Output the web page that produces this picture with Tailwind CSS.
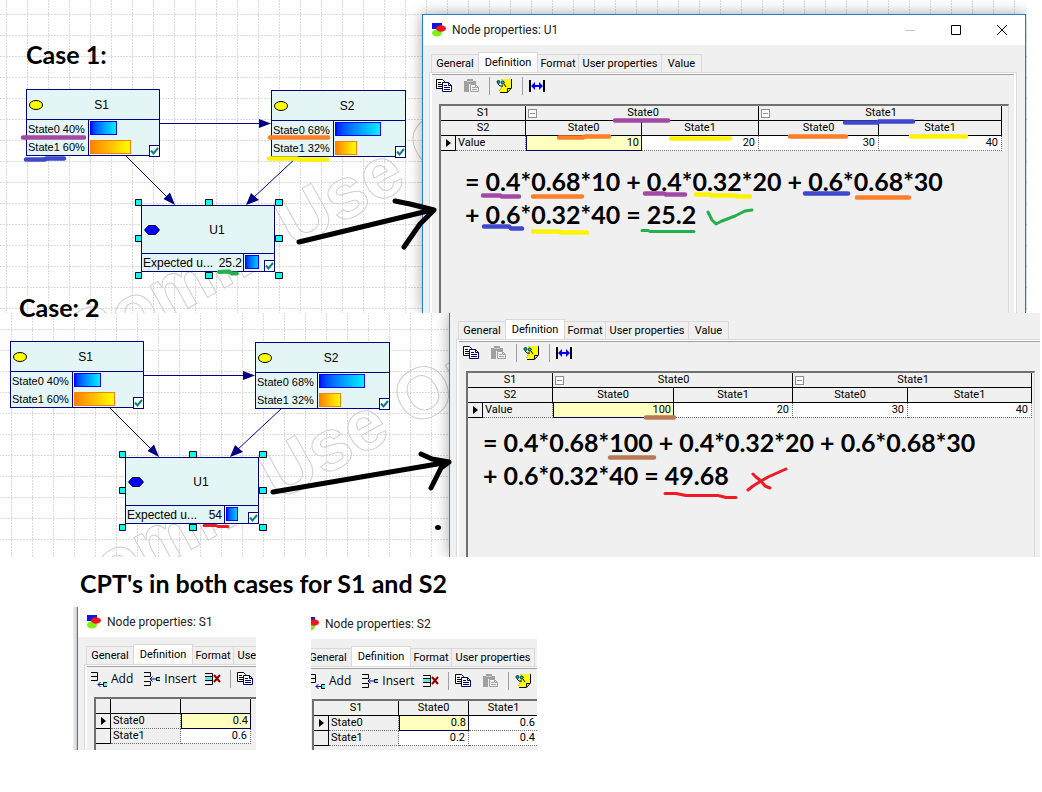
<!DOCTYPE html>
<html lang="en">
<head>
<meta charset="utf-8">
<title>Expected utility: two cases</title>
<script src="https://cdn.jsdelivr.net/npm/@tailwindcss/browser@4"></script>
</head>
<body class="bg-white text-black">
<svg width="0" height="0" class="absolute" aria-hidden="true">
  <defs>
    <pattern id="dots" width="21" height="21" patternUnits="userSpaceOnUse">
      <path d="M6.5 0V21M0 14.5H21" stroke="#dadada" stroke-dasharray="2 1" fill="none"/>
    </pattern>
    <symbol id="logo" viewBox="0 0 16 16">
      <rect x="1" y="1" width="10" height="6" fill="#1414e0"/>
      <ellipse cx="6" cy="11" rx="5" ry="3.500" fill="#80f010"/>
      <ellipse cx="10" cy="6.500" rx="5" ry="3.200" fill="#f01818"/>
    </symbol>
    <symbol id="copy" viewBox="0 0 16 16">
      <path d="M.5 1.500H6.500L8.500 3.500V10.500H.5Z" fill="#fff" stroke="#000"/>
      <path d="M2 4.500H5M2 6.500H6M2 8.500H6" stroke="#000"/>
      <path d="M6.500 4.500H12.500L15.500 7.500V13.500H6.500Z" fill="#fff" stroke="#000060"/>
      <path d="M12.500 4.500V7.500H15.500M8 7.500H11M8 9.500H14M8 11.500H14" stroke="#000060" fill="none"/>
    </symbol>
    <symbol id="paste" viewBox="0 0 16 16">
      <path d="M1 3H4V1H10V3H13V6H6V14H1Z" fill="#a0a0a0"/>
      <path d="M4 3.500H10" stroke="#c8c8c8"/>
      <path d="M7.500 6.500H12.500L15.500 9.500V13.500H7.500Z" fill="#f4f4f4" stroke="#a0a0a0"/>
      <path d="M9 9.500H12M9 11.500H14M12.500 6.500V9.500H15.500" stroke="#a0a0a0" fill="none"/>
    </symbol>
    <symbol id="note" viewBox="0 0 16 16">
      <path d="M6 1H15V10L11 14L3 13.500L6 9Z" fill="#ffff00"/>
      <path d="M15.500 1V10L11.500 14.500H4M11.500 14V10.500H15" stroke="#000" fill="none"/>
      <path d="M6 1V9L3 13" stroke="#c0c000" fill="none"/>
      <ellipse cx="2.500" cy="4" rx="1.500" ry="1.500" fill="#00a0a0" stroke="#003c3c"/>
      <ellipse cx="6.800" cy="4.500" rx="1.500" ry="1.500" fill="#00c0c0" stroke="#003c3c"/>
      <path d="M2 6L4 8H7M8 6L10 9" stroke="#000" fill="none"/>
    </symbol>
    <symbol id="fit" viewBox="0 0 16 16">
      <path d="M1 2V14M15 2V14" stroke="#000" stroke-width="2"/>
      <path d="M4 8H12" stroke="#0000ff" stroke-width="2"/>
      <path d="M2 8L6 4V12ZM14 8L10 4V12Z" fill="#0000ff"/>
    </symbol>
    <symbol id="addrow" viewBox="0 0 16 16">
      <path d="M0 1.500H6.500V9.500H0M0 5.500H6.500" stroke="#000" fill="none"/>
      <path d="M7 13.500H12M9.500 11L7 13.500L9.500 16" stroke="#000080" fill="none"/>
      <path d="M16 11.500H12.500V15.500H16" stroke="#000" fill="none"/><rect x="13" y="12" width="3" height="3" fill="#60e8e8"/>
    </symbol>
    <symbol id="insrow" viewBox="0 0 16 16">
      <path d="M0 1.500H6.500V5.500H0M0 14.500H6.500V10.500H0" stroke="#000" fill="none"/>
      <path d="M6 8H12M8.500 5.500L6 8L8.500 10.500" stroke="#000080" fill="none"/>
      <path d="M16 6.500H12.500V9.500H16" stroke="#000" fill="none"/><rect x="13" y="7" width="3" height="2" fill="#60e8e8"/>
    </symbol>
    <symbol id="delrow" viewBox="0 0 16 16">
      <rect x="0" y="6" width="8" height="3" fill="#60e8e8"/>
      <path d="M0 2.500H7.500V13.500H0M0 5.500H8M0 9.500H8" stroke="#000" fill="none"/>
      <path d="M9 4L15 11M15 4L9 11" stroke="#900000" stroke-width="2"/>
    </symbol>
    <symbol id="tick" viewBox="0 0 9 10"><path d="M1 4.500L3.500 7.500L8 2" stroke="#008080" stroke-width="2" fill="none"/></symbol>
    <symbol id="oval" viewBox="0 0 16 12"><ellipse cx="8" cy="6" rx="6.500" ry="4.500" fill="#ffff00" stroke="#000"/></symbol>
    <symbol id="hex" viewBox="0 0 16 12"><path d="M.5 6L4.500 1.500H11.500L15.500 6L11.500 10.500H4.500Z" fill="#0000ff" stroke="#000040"/></symbol>
    <symbol id="edges" viewBox="0 0 1042 400">
      <path d="M160 123.500H262M126 156L168 198M297 157L252 199" stroke="#000080" fill="none"/>
      <path d="M271 123.500L259 119V128ZM175 205L163.500 199L170 192.500ZM246 205L251 193L259 200Z" fill="#000080"/>
    </symbol>
    <symbol id="grips" viewBox="0 0 1042 400">
      <path d="M135.500 199.500h6v6h-6zM205.500 199.500h7v6h-7zM275.500 199.500h7v6h-7zM135.500 235.500h6v6h-6zM275.500 235.500h7v6h-7zM135.500 272.500h6v6h-6zM205.500 272.500h7v6h-7zM275.500 272.500h7v6h-7z" fill="#00ffff" stroke="#000"/>
    </symbol>
  </defs>
</svg>

<main class="relative overflow-hidden">
  <!-- Case 1 -->
  <section class="relative mr-[15px] flex h-[313px] overflow-hidden" aria-label="Case 1">
    <div class="absolute top-0 left-0 h-[400px] w-[1042px] font-['Liberation_Sans',sans-serif] text-[11px] leading-[18px]">
      <svg class="absolute inset-0" width="1042" height="400" aria-hidden="true"><rect width="1042" height="400" fill="url(#dots)"/><text transform="translate(80 368) rotate(-29)" font-weight="700" font-size="72" fill="none" stroke="#cfcfcf">Comm Use Only</text></svg>
      <svg class="absolute inset-0" width="1042" height="400"><use href="#edges"/></svg>
      <div class="absolute top-[89px] left-[26px] h-[67px] w-[134px] border border-[#000080] bg-[#e4f5f5]">
        <div class="flex h-[30px] items-center border-b border-[#000080]"><svg class="ml-px" width="16" height="12"><use href="#oval"/></svg><span class="flex-1 text-center text-xs">S1</span></div>
        <div class="flex">
          <div class="h-[35px] w-[62px] border-r border-[#000080] pl-px whitespace-nowrap"><p>State0 40%</p><p>State1 60%</p></div>
          <div class="flex flex-col gap-[5px] pt-px pl-px"><div class="h-[14px] w-[27px] border border-[#0000ff] bg-linear-to-r from-[#0000ff] to-[#00f0ff]"></div><div class="h-[14px] w-[41px] border border-[#ff8000] bg-linear-to-r from-[#ff8000] to-[#ffff00]"></div></div>
        </div>
        <label class="absolute -right-px -bottom-[2px] h-[12px] w-[11px]"><input type="checkbox" checked aria-label="S1 updated" class="block size-full appearance-none border border-[#000080] bg-white"><svg class="absolute top-px left-px" width="9" height="10"><use href="#tick"/></svg></label>
      </div>
      <div class="absolute top-[90px] left-[271px] h-[67px] w-[135px] border border-[#000080] bg-[#e4f5f5]">
        <div class="flex h-[30px] items-center border-b border-[#000080]"><svg class="ml-px" width="16" height="12"><use href="#oval"/></svg><span class="flex-1 text-center text-xs">S2</span></div>
        <div class="flex">
          <div class="h-[35px] w-[62px] border-r border-[#000080] pl-px whitespace-nowrap"><p>State0 68%</p><p>State1 32%</p></div>
          <div class="flex flex-col gap-[5px] pt-px pl-px"><div class="h-[14px] w-[46px] border border-[#0000ff] bg-linear-to-r from-[#0000ff] to-[#00f0ff]"></div><div class="h-[14px] w-[22px] border border-[#ff8000] bg-linear-to-r from-[#ff8000] to-[#ffff00]"></div></div>
        </div>
        <label class="absolute -right-px -bottom-[2px] h-[12px] w-[11px]"><input type="checkbox" checked aria-label="S2 updated" class="block size-full appearance-none border border-[#000080] bg-white"><svg class="absolute top-px left-px" width="9" height="10"><use href="#tick"/></svg></label>
      </div>
      <div class="absolute top-[205px] left-[141px] h-[67px] w-[134px] border border-[#000080] bg-[#e4f5f5]">
        <div class="flex h-[48px] items-center border-b border-[#000080]"><svg class="ml-[2px]" width="16" height="12"><use href="#hex"/></svg><span class="flex-1 text-center text-xs">U1</span></div>
        <div class="flex text-xs leading-[18px]">
          <div class="flex h-[17px] w-[102px] justify-between border-r border-[#000080] px-px whitespace-nowrap"><span>Expected u...</span><span>25.2</span></div>
          <div class="mt-px ml-px h-[14px] w-[14px] border border-[#0000ff] bg-linear-to-r from-[#0000ff] to-[#00c8ff]"></div>
        </div>
        <label class="absolute -right-px -bottom-px h-[12px] w-[11px]"><input type="checkbox" checked aria-label="U1 updated" class="block size-full appearance-none border border-[#000080] bg-white"><svg class="absolute top-px left-px" width="9" height="10"><use href="#tick"/></svg></label>
      </div>
      <svg class="absolute inset-0" width="1042" height="400"><use href="#grips"/></svg>
    </div>
    <div class="w-[422px] shrink-0"></div>
    <div class="relative mt-[14px] mr-px flex flex-1 flex-col border border-b-0 border-[#1883d7] bg-[#f0f0f0] shadow-[0_0_14px_rgba(0,0,0,0.35)]">
      <header class="flex h-[30px] items-center bg-white pl-2">
        <svg width="16" height="16"><use href="#logo"/></svg>
        <h2 class="ml-[5px] flex-1 font-['Roboto',sans-serif] text-[12px] text-[#222]">Node properties: U1</h2>
        <button class="mr-[34px]" aria-label="Minimize"><svg class="block" width="12" height="12"><path d="M1 6.500H11" stroke="#c8c8c8"/></svg></button>
        <button class="mr-[34px]" aria-label="Maximize"><svg class="block" width="12" height="12"><path d="M1.500 1.500H10.500V10.500H1.500Z" fill="none" stroke="#000"/></svg></button>
        <button class="mr-[17px]" aria-label="Close"><svg class="block" width="12" height="12"><path d="M1 1L11 11M11 1L1 11" stroke="#000"/></svg></button>
      </header>
      <div class="flex flex-1 flex-col pt-[7px] pr-2 pl-[6px] font-['Roboto',sans-serif] text-[11px] leading-[14px]">
        <div role="tablist" class="flex items-end pl-[2px] whitespace-nowrap">
          <button role="tab" class="h-[18px] w-[47px] border border-r-0 border-b-0 border-[#d9d9d9]">General</button>
          <button role="tab" aria-selected="true" class="h-[20px] w-[60px] border border-b-0 border-[#d9d9d9] bg-white">Definition</button>
          <button role="tab" class="h-[18px] w-[41px] border border-b-0 border-l-0 border-[#d9d9d9]">Format</button>
          <button role="tab" class="h-[18px] w-[83px] border border-b-0 border-l-0 border-[#d9d9d9]">User properties</button>
          <button role="tab" class="h-[18px] w-[40px] border border-b-0 border-l-0 border-[#d9d9d9]">Value</button>
        </div>
        <div role="tabpanel" class="flex flex-1 flex-col border-x border-t border-[#d9d9d9]">
          <div class="flex flex-1 flex-col border-x-2 border-t border-white">
            <div class="flex flex-1 flex-col border-t border-[#a0a0a0] pr-[5px] pl-[7px]">
              <div role="toolbar" class="mb-[7px] flex h-[22px] items-center">
                <button aria-label="Copy" class="-ml-[3px]"><svg class="block" width="16" height="16"><use href="#copy"/></svg></button>
                <button aria-label="Paste" class="ml-[11px]"><svg class="block" width="16" height="16"><use href="#paste"/></svg></button>
                <i class="ml-[10px] h-[18px] w-px bg-[#a0a0a0]"></i>
                <button aria-label="Note" class="ml-[6px]"><svg class="block" width="16" height="16"><use href="#note"/></svg></button>
                <i class="ml-[10px] h-[18px] w-px bg-[#a0a0a0]"></i>
                <button aria-label="Fit width" class="ml-[6px]"><svg class="block" width="16" height="16"><use href="#fit"/></svg></button>
              </div>
              <div class="flex-1 border-t-2 border-r border-l-2 border-t-[#707070] border-r-[#d9d9d9] border-l-[#707070]">
                <table class="table-fixed border-separate border-spacing-0">
                  <colgroup><col class="w-[15px]"><col class="w-[70px]"><col class="w-[116px]"><col class="w-[117px]"><col class="w-[120px]"><col class="w-[123px]"></colgroup>
                  <tr><th colspan="2" class="h-[15px] border-r border-b p-0 font-normal">S1</th><th colspan="2" class="border-r border-b p-0 font-normal"><div class="flex items-center pr-[9px] pl-[2px]"><button aria-label="Collapse State0" class="size-[9px] border border-[#909090] bg-white"><i class="mx-px block h-px bg-[#909090]"></i></button><span class="flex-1">State0</span></div></th><th colspan="2" class="border-r border-b p-0 font-normal"><div class="flex items-center pr-[9px] pl-[2px]"><button aria-label="Collapse State1" class="size-[9px] border border-[#909090] bg-white"><i class="mx-px block h-px bg-[#909090]"></i></button><span class="flex-1">State1</span></div></th></tr>
                  <tr><th colspan="2" class="h-[15px] border-r border-b p-0 font-normal">S2</th><th class="border-r border-b p-0 font-normal">State0</th><th class="border-r border-b p-0 font-normal">State1</th><th class="border-r border-b p-0 font-normal">State0</th><th class="border-r border-b p-0 font-normal">State1</th></tr>
                  <tr class="text-right"><td class="h-[15px] border-r border-b p-0"><svg class="ml-[5px] block" width="6" height="10"><path d="M0 1V9L5 5Z"/></svg></td><td class="border-r border-b border-dotted border-[#707070] p-0 pl-[2px] text-left">Value</td><td class="border border-t-0 border-[#000060] bg-[#ffffc0] p-0 pr-[2px]">10</td><td class="border-r border-b border-dotted border-[#707070] bg-white p-0 pr-[3px]">20</td><td class="border-r border-b border-dotted border-[#707070] bg-white p-0 pr-[3px]">30</td><td class="border-r border-b border-dotted border-[#707070] bg-white p-0 pr-[3px]">40</td></tr>
                </table>
                <p class="pt-[14px] pl-6 font-['Lato',sans-serif] text-[25px] leading-[33px] font-bold whitespace-nowrap">= 0.4*0.68*10 + 0.4*0.32*20 + 0.6*0.68*30<br>+ 0.6*0.32*40 = 25.2</p>
              </div>
            </div>
          </div>
        </div>
      </div>
    </div>
  </section>

  <!-- Case 2 -->
  <section class="relative mr-[2px] flex h-[244px] overflow-hidden bg-white" aria-label="Case 2">
    <div class="absolute -top-[61px] -left-[16px] h-[400px] w-[1042px] font-['Liberation_Sans',sans-serif] text-[11px] leading-[18px]">
      <svg class="absolute inset-0" width="1042" height="400" aria-hidden="true"><rect width="1042" height="400" fill="url(#dots)"/><text transform="translate(80 368) rotate(-29)" font-weight="700" font-size="72" fill="none" stroke="#cfcfcf">Comm Use Only</text></svg>
      <svg class="absolute inset-0" width="1042" height="400"><use href="#edges"/></svg>
      <div class="absolute top-[89px] left-[26px] h-[67px] w-[134px] border border-[#000080] bg-[#e4f5f5]">
        <div class="flex h-[30px] items-center border-b border-[#000080]"><svg class="ml-px" width="16" height="12"><use href="#oval"/></svg><span class="flex-1 text-center text-xs">S1</span></div>
        <div class="flex">
          <div class="h-[35px] w-[62px] border-r border-[#000080] pl-px whitespace-nowrap"><p>State0 40%</p><p>State1 60%</p></div>
          <div class="flex flex-col gap-[5px] pt-px pl-px"><div class="h-[14px] w-[27px] border border-[#0000ff] bg-linear-to-r from-[#0000ff] to-[#00f0ff]"></div><div class="h-[14px] w-[41px] border border-[#ff8000] bg-linear-to-r from-[#ff8000] to-[#ffff00]"></div></div>
        </div>
        <label class="absolute -right-px -bottom-[2px] h-[12px] w-[11px]"><input type="checkbox" checked aria-label="S1 updated" class="block size-full appearance-none border border-[#000080] bg-white"><svg class="absolute top-px left-px" width="9" height="10"><use href="#tick"/></svg></label>
      </div>
      <div class="absolute top-[90px] left-[271px] h-[67px] w-[135px] border border-[#000080] bg-[#e4f5f5]">
        <div class="flex h-[30px] items-center border-b border-[#000080]"><svg class="ml-px" width="16" height="12"><use href="#oval"/></svg><span class="flex-1 text-center text-xs">S2</span></div>
        <div class="flex">
          <div class="h-[35px] w-[62px] border-r border-[#000080] pl-px whitespace-nowrap"><p>State0 68%</p><p>State1 32%</p></div>
          <div class="flex flex-col gap-[5px] pt-px pl-px"><div class="h-[14px] w-[46px] border border-[#0000ff] bg-linear-to-r from-[#0000ff] to-[#00f0ff]"></div><div class="h-[14px] w-[22px] border border-[#ff8000] bg-linear-to-r from-[#ff8000] to-[#ffff00]"></div></div>
        </div>
        <label class="absolute -right-px -bottom-[2px] h-[12px] w-[11px]"><input type="checkbox" checked aria-label="S2 updated" class="block size-full appearance-none border border-[#000080] bg-white"><svg class="absolute top-px left-px" width="9" height="10"><use href="#tick"/></svg></label>
      </div>
      <div class="absolute top-[205px] left-[141px] h-[67px] w-[134px] border border-[#000080] bg-[#e4f5f5]">
        <div class="flex h-[48px] items-center border-b border-[#000080]"><svg class="ml-[2px]" width="16" height="12"><use href="#hex"/></svg><span class="flex-1 text-center text-xs">U1</span></div>
        <div class="flex text-xs leading-[18px]">
          <div class="flex h-[17px] w-[99px] justify-between border-r border-[#000080] pr-[2px] pl-px whitespace-nowrap"><span>Expected u...</span><span>54</span></div>
          <div class="mt-px ml-px h-[14px] w-[12px] border border-[#0000ff] bg-linear-to-r from-[#0000ff] to-[#00c8ff]"></div>
        </div>
        <label class="absolute -right-px -bottom-px h-[12px] w-[11px]"><input type="checkbox" checked aria-label="U1 updated" class="block size-full appearance-none border border-[#000080] bg-white"><svg class="absolute top-px left-px" width="9" height="10"><use href="#tick"/></svg></label>
      </div>
      <svg class="absolute inset-0" width="1042" height="400"><use href="#grips"/></svg>
    </div>
    <div class="w-[449px] shrink-0"></div>
    <div class="relative flex flex-1 flex-col border-l border-[#1883d7] bg-[#f0f0f0] shadow-[0_0_14px_rgba(0,0,0,0.35)]">
      <div class="flex flex-1 flex-col pt-[6px] pl-[6px] font-['Roboto',sans-serif] text-[11px] leading-[14px]">
        <div role="tablist" class="flex items-end pl-[2px] whitespace-nowrap">
          <button role="tab" class="h-[18px] w-[47px] border border-r-0 border-b-0 border-[#d9d9d9]">General</button>
          <button role="tab" aria-selected="true" class="h-[20px] w-[60px] border border-b-0 border-[#d9d9d9] bg-white">Definition</button>
          <button role="tab" class="h-[18px] w-[41px] border border-b-0 border-l-0 border-[#d9d9d9]">Format</button>
          <button role="tab" class="h-[18px] w-[83px] border border-b-0 border-l-0 border-[#d9d9d9]">User properties</button>
          <button role="tab" class="h-[18px] w-[40px] border border-b-0 border-l-0 border-[#d9d9d9]">Value</button>
        </div>
        <div role="tabpanel" class="flex flex-1 flex-col border-t border-l border-[#d9d9d9]">
          <div class="flex flex-1 flex-col border-t border-l-2 border-white">
            <div class="flex flex-1 flex-col border-t border-[#a0a0a0] pr-[5px] pl-[7px]">
              <div role="toolbar" class="mb-[7px] flex h-[22px] items-center">
                <button aria-label="Copy" class="-ml-[3px]"><svg class="block" width="16" height="16"><use href="#copy"/></svg></button>
                <button aria-label="Paste" class="ml-[11px]"><svg class="block" width="16" height="16"><use href="#paste"/></svg></button>
                <i class="ml-[10px] h-[18px] w-px bg-[#a0a0a0]"></i>
                <button aria-label="Note" class="ml-[6px]"><svg class="block" width="16" height="16"><use href="#note"/></svg></button>
                <i class="ml-[10px] h-[18px] w-px bg-[#a0a0a0]"></i>
                <button aria-label="Fit width" class="ml-[6px]"><svg class="block" width="16" height="16"><use href="#fit"/></svg></button>
              </div>
              <div class="flex-1 border-t-2 border-r border-l-2 border-t-[#707070] border-r-[#d9d9d9] border-l-[#707070]">
                <table class="table-fixed border-separate border-spacing-0">
                  <colgroup><col class="w-[15px]"><col class="w-[70px]"><col class="w-[121px]"><col class="w-[119px]"><col class="w-[115px]"><col class="w-[124px]"></colgroup>
                  <tr><th colspan="2" class="h-[15px] border-r border-b p-0 font-normal">S1</th><th colspan="2" class="border-r border-b p-0 font-normal"><div class="flex items-center pr-[9px] pl-[2px]"><button aria-label="Collapse State0" class="size-[9px] border border-[#909090] bg-white"><i class="mx-px block h-px bg-[#909090]"></i></button><span class="flex-1">State0</span></div></th><th colspan="2" class="border-r border-b p-0 font-normal"><div class="flex items-center pr-[9px] pl-[2px]"><button aria-label="Collapse State1" class="size-[9px] border border-[#909090] bg-white"><i class="mx-px block h-px bg-[#909090]"></i></button><span class="flex-1">State1</span></div></th></tr>
                  <tr><th colspan="2" class="h-[15px] border-r border-b p-0 font-normal">S2</th><th class="border-r border-b p-0 font-normal">State0</th><th class="border-r border-b p-0 font-normal">State1</th><th class="border-r border-b p-0 font-normal">State0</th><th class="border-r border-b p-0 font-normal">State1</th></tr>
                  <tr class="text-right"><td class="h-[15px] border-r border-b p-0"><svg class="ml-[5px] block" width="6" height="10"><path d="M0 1V9L5 5Z"/></svg></td><td class="border-r border-b border-dotted border-[#707070] p-0 pl-[2px] text-left">Value</td><td class="border border-t-0 border-[#000060] bg-[#ffffc0] p-0 pr-[2px]">100</td><td class="border-r border-b border-dotted border-[#707070] bg-white p-0 pr-[3px]">20</td><td class="border-r border-b border-dotted border-[#707070] bg-white p-0 pr-[3px]">30</td><td class="border-r border-b border-dotted border-[#707070] bg-white p-0 pr-[3px]">40</td></tr>
                </table>
                <p class="pt-[8px] pl-[15px] font-['Lato',sans-serif] text-[25px] leading-[33px] font-bold whitespace-nowrap">= 0.4*0.68*100 + 0.4*0.32*20 + 0.6*0.68*30<br>+ 0.6*0.32*40 = 49.68</p>
              </div>
            </div>
          </div>
        </div>
      </div>
    </div>
  </section>

  <!-- Probability tables of the two chance nodes -->
  <section class="bg-white">
    <h1 class="h-[50px] pt-[10px] pl-[80px] font-['Lato',sans-serif] text-[25px] leading-[33px] font-bold">CPT's in both cases for S1 and S2</h1>
    <div class="flex gap-[55px] pl-[73px]">
      <div class="flex h-[143px] w-[183px] overflow-hidden">
        <div class="w-[4px] shrink-0 bg-linear-to-r from-[#f0f0f0] to-[#cfcfcf]"></div>
        <div class="flex w-[300px] shrink-0 flex-col border-l border-[#1883d7] bg-[#f0f0f0]">
          <header class="flex h-[30px] items-center bg-white pl-2"><svg width="16" height="16"><use href="#logo"/></svg><h2 class="ml-[5px] font-['Roboto',sans-serif] text-[12px] text-[#222]">Node properties: S1</h2></header>
          <div class="flex flex-1 flex-col pt-[7px] pl-[6px] font-['Roboto',sans-serif] text-[11px] leading-[14px]">
            <div role="tablist" class="flex items-end pl-[2px] whitespace-nowrap">
              <button role="tab" class="h-[18px] w-[47px] border border-r-0 border-b-0 border-[#d9d9d9]">General</button>
              <button role="tab" aria-selected="true" class="h-[20px] w-[60px] border border-b-0 border-[#d9d9d9] bg-white">Definition</button>
              <button role="tab" class="h-[18px] w-[41px] border border-b-0 border-l-0 border-[#d9d9d9]">Format</button>
              <button role="tab" class="h-[18px] w-[83px] border border-b-0 border-l-0 border-[#d9d9d9]">User properties</button>
            </div>
            <div role="tabpanel" class="flex flex-1 flex-col border-t border-l border-[#d9d9d9]">
              <div class="flex flex-1 flex-col border-t border-l-2 border-white">
                <div class="flex flex-1 flex-col border-t border-[#a0a0a0] pl-[7px]">
                  <div role="toolbar" class="mb-[6px] flex h-[24px] items-center font-['Open_Sans',sans-serif] text-[12px]">
                    <button class="-ml-[3px] flex items-center gap-1"><svg width="16" height="16"><use href="#addrow"/></svg>Add</button>
                    <button class="ml-[11px] flex items-center gap-1"><svg width="16" height="16"><use href="#insrow"/></svg>Insert</button>
                    <button aria-label="Delete" class="ml-[8px]"><svg class="block" width="16" height="16"><use href="#delrow"/></svg></button>
                    <i class="ml-[9px] h-[18px] w-px bg-[#a0a0a0]"></i>
                    <button aria-label="Copy" class="ml-[6px]"><svg class="block" width="16" height="16"><use href="#copy"/></svg></button>
                  </div>
                  <div class="flex-1 border-t-2 border-l-2 border-[#707070]">
                    <table class="table-fixed border-separate border-spacing-0">
                      <colgroup><col class="w-[15px]"><col class="w-[70px]"><col class="w-[70px]"></colgroup>
                      <tr><td class="h-[15px] border-r border-b p-0"></td><td class="border-r border-b p-0"></td><td class="border-r border-b p-0"></td></tr>
                      <tr class="text-right"><td class="h-[15px] border-r border-b p-0"><svg class="ml-[5px] block" width="6" height="10"><path d="M0 1V9L5 5Z"/></svg></td><td class="border-r border-b border-dotted border-[#707070] p-0 pl-[2px] text-left">State0</td><td class="border border-t-0 border-[#000060] bg-[#ffffc0] p-0 pr-[2px]">0.4</td></tr>
                      <tr class="text-right"><td class="h-[15px] border-r border-b p-0"></td><td class="border-r border-b border-dotted border-[#707070] p-0 pl-[2px] text-left">State1</td><td class="border-r border-b border-dotted border-[#707070] bg-white p-0 pr-[3px]">0.6</td></tr>
                    </table>
                  </div>
                </div>
              </div>
            </div>
          </div>
        </div>
      </div>
      <div class="flex h-[143px] w-[226px] overflow-hidden pt-[2px]">
        <div class="-ml-[15px] flex w-[300px] shrink-0 flex-col bg-[#f0f0f0]">
          <header class="flex h-[30px] items-center bg-white pl-2"><svg width="16" height="16"><use href="#logo"/></svg><h2 class="ml-[5px] font-['Roboto',sans-serif] text-[12px] text-[#222]">Node properties: S2</h2></header>
          <div class="flex flex-1 flex-col pt-[7px] pl-[6px] font-['Roboto',sans-serif] text-[11px] leading-[14px]">
            <div role="tablist" class="flex items-end pl-[2px] whitespace-nowrap">
              <button role="tab" class="h-[18px] w-[47px] border border-r-0 border-b-0 border-[#d9d9d9]">General</button>
              <button role="tab" aria-selected="true" class="h-[20px] w-[60px] border border-b-0 border-[#d9d9d9] bg-white">Definition</button>
              <button role="tab" class="h-[18px] w-[41px] border border-b-0 border-l-0 border-[#d9d9d9]">Format</button>
              <button role="tab" class="h-[18px] w-[83px] border border-b-0 border-l-0 border-[#d9d9d9]">User properties</button>
            </div>
            <div role="tabpanel" class="flex flex-1 flex-col border-t border-l border-[#d9d9d9]">
              <div class="flex flex-1 flex-col border-t border-l-2 border-white">
                <div class="flex flex-1 flex-col border-t border-[#a0a0a0] pl-[7px]">
                  <div role="toolbar" class="mb-[6px] flex h-[24px] items-center font-['Open_Sans',sans-serif] text-[12px]">
                    <button class="-ml-[3px] flex items-center gap-1"><svg width="16" height="16"><use href="#addrow"/></svg>Add</button>
                    <button class="ml-[11px] flex items-center gap-1"><svg width="16" height="16"><use href="#insrow"/></svg>Insert</button>
                    <button aria-label="Delete" class="ml-[8px]"><svg class="block" width="16" height="16"><use href="#delrow"/></svg></button>
                    <i class="ml-[9px] h-[18px] w-px bg-[#a0a0a0]"></i>
                    <button aria-label="Copy" class="ml-[6px]"><svg class="block" width="16" height="16"><use href="#copy"/></svg></button>
                    <button aria-label="Paste" class="ml-[11px]"><svg class="block" width="16" height="16"><use href="#paste"/></svg></button>
                    <i class="ml-[10px] h-[18px] w-px bg-[#a0a0a0]"></i>
                    <button aria-label="Note" class="ml-[6px]"><svg class="block" width="16" height="16"><use href="#note"/></svg></button>
                  </div>
                  <div class="flex-1 border-t-2 border-l-2 border-[#707070]">
                    <table class="table-fixed border-separate border-spacing-0">
                      <colgroup><col class="w-[15px]"><col class="w-[70px]"><col class="w-[70px]"><col class="w-[70px]"></colgroup>
                      <tr><th colspan="2" class="h-[15px] border-r border-b p-0 font-normal">S1</th><th class="border-r border-b p-0 font-normal">State0</th><th class="border-r border-b p-0 font-normal">State1</th></tr>
                      <tr class="text-right"><td class="h-[15px] border-r border-b p-0"><svg class="ml-[5px] block" width="6" height="10"><path d="M0 1V9L5 5Z"/></svg></td><td class="border-r border-b border-dotted border-[#707070] p-0 pl-[2px] text-left">State0</td><td class="border border-t-0 border-[#000060] bg-[#ffffc0] p-0 pr-[2px]">0.8</td><td class="border-r border-b border-dotted border-[#707070] bg-white p-0 pr-[3px]">0.6</td></tr>
                      <tr class="text-right"><td class="h-[15px] border-r border-b p-0"></td><td class="border-r border-b border-dotted border-[#707070] p-0 pl-[2px] text-left">State1</td><td class="border-r border-b border-dotted border-[#707070] bg-white p-0 pr-[3px]">0.2</td><td class="border-r border-b border-dotted border-[#707070] bg-white p-0 pr-[3px]">0.4</td></tr>
                    </table>
                  </div>
                </div>
              </div>
            </div>
          </div>
        </div>
      </div>
    </div>
  </section>

  <!-- Captions and pen marks drawn over the diagrams -->
  <h2 class="absolute top-[38px] left-[26px] font-['Lato',sans-serif] text-[25px] leading-[33px] font-bold">Case 1:</h2>
  <h2 class="absolute top-[291px] left-[19px] font-['Lato',sans-serif] text-[25px] leading-[33px] font-bold">Case: 2</h2>
  <svg class="pointer-events-none absolute top-0 left-0" width="1042" height="792" fill="none" stroke-width="4.500" stroke-linecap="round" stroke-linejoin="round" aria-hidden="true">
    <path stroke="#a349a4" d="M23 137.500H84M615 120.500H668M483 195.500H500L502 196.500H519M645 193.500H664L666 194.500H685"/>
    <path stroke="#3f48cc" d="M26 159.500H44L47 158.500H64M845 122.500H877L879 121.500H913M805 193.500H848M484 226.500H509L511 228.500H522"/>
    <path stroke="#ff7f27" d="M270 137.500H328M559 137.500H583L585 136.500H609M790 136.500H846M533 196.500H582M857 197.500H909"/>
    <path stroke="#fff200" d="M269 158.500H297L299 159.500H327M671 138.500H730M911 136.500H966M696 194.500H710L712 195.500H735L737 196.500H750M533 231.500H559L561 232.500H587"/>
    <path stroke="#22b14c" stroke-width="4" d="M219 272L229 271.500L232 273.500H237"/>
    <path stroke="#22b14c" stroke-width="3" d="M642 230.500H648L650 231.500H694M708 212L712 220L716 224L722 221L735 216L745 211L752 210"/>
    <path stroke="#b97a57" d="M646 417.500H674M610 457.500H654"/>
    <path stroke="#ed1c24" stroke-width="3" d="M204 525.500H216L218 526.500H228M665 493.500H676L686 495.500H718L726 497.500H736M748 490L753 486L761 481L768 477L786 469M753 474L756 477L761 481L765 486L770 488"/>
    <path stroke="#000" stroke-width="5" d="M299 242L432 210M395 201L410 204L434 210L420 224L404 247M273 492L449 462M421 454L432 459L449 462L441 468L431 488"/>
    <ellipse cx="438" cy="527.500" rx="3" ry="2.500" fill="#000"/>
  </svg>
</main>
</body>
</html>
